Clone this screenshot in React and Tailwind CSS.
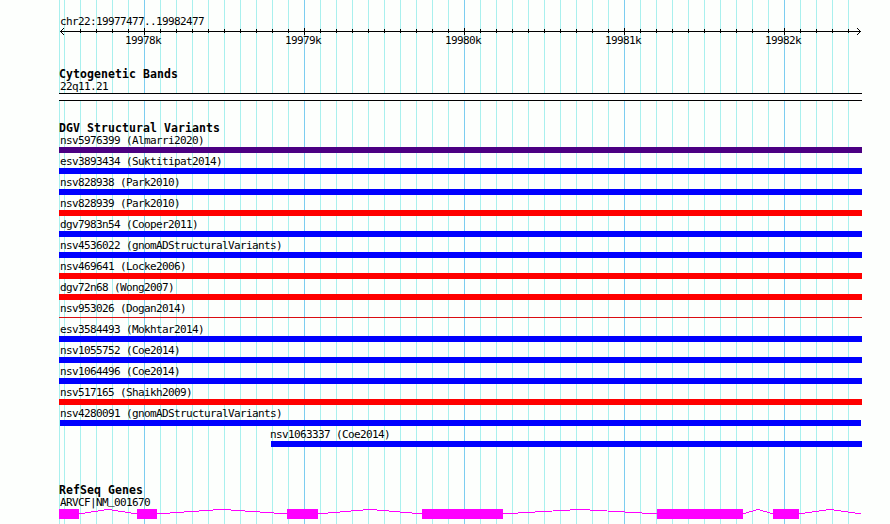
// Genome browser view of chr22:19977477..19982477
const LEFT = 59;
const WIDTH = 803;

// one grid line every 16px (100 bp), a major one every 1000 bp
const ticks = Array.from({ length: 50 }, (_, i) => 64 + i * 16);
const isMajor = (x) => (x - 144) % 160 === 0;

const labels = ['19978k', '19979k', '19980k', '19981k', '19982k'];

const variants = [
  { name: 'nsv5976399 (Almarri2020)', color: 'bg-[#4b0082]' },
  { name: 'esv3893434 (Suktitipat2014)', color: 'bg-[#0000ff]' },
  { name: 'nsv828938 (Park2010)', color: 'bg-[#0000ff]' },
  { name: 'nsv828939 (Park2010)', color: 'bg-[#ff0000]' },
  { name: 'dgv7983n54 (Cooper2011)', color: 'bg-[#0000ff]' },
  { name: 'nsv4536022 (gnomADStructuralVariants)', color: 'bg-[#0000ff]' },
  { name: 'nsv469641 (Locke2006)', color: 'bg-[#ff0000]' },
  { name: 'dgv72n68 (Wong2007)', color: 'bg-[#ff0000]' },
  { name: 'nsv953026 (Dogan2014)', color: 'bg-[#d90d12]', thin: true },
  { name: 'esv3584493 (Mokhtar2014)', color: 'bg-[#0000ff]' },
  { name: 'nsv1055752 (Coe2014)', color: 'bg-[#0000ff]' },
  { name: 'nsv1064496 (Coe2014)', color: 'bg-[#0000ff]' },
  { name: 'nsv517165 (Shaikh2009)', color: 'bg-[#ff0000]' },
  { name: 'nsv4280091 (gnomADStructuralVariants)', color: 'bg-[#0000ff]', bar: 'ml-px mr-px' },
  { name: 'nsv1063337 (Coe2014)', color: 'bg-[#0000ff]', text: 'pl-[211px]', bar: 'ml-[212px]' },
];

const exons = [
  [59, 79],
  [137, 157],
  [287, 318],
  [422, 503],
  [657, 743],
  [773, 799],
];

const GridLines = () => (
  <svg className="absolute inset-0 -z-10" width="890" height="524" shapeRendering="crispEdges">
    <rect x={LEFT} y="0" width="1" height="524" fill="#a9f0ee" />
    {ticks.map((x) => (
      <rect key={x} x={x} y="0" width="1" height="524" fill={isMajor(x) ? '#7ccdf0' : '#a9f0ee'} />
    ))}
  </svg>
);

const Ruler = () => (
  <svg className="block" width={WIDTH} height="7" viewBox="59 28 803 7" shapeRendering="crispEdges">
    <rect x="60" y="31" width="801" height="1" />
    {ticks.slice(1).map((x) => (
      <rect key={x} x={x} y={isMajor(x) ? 28 : 29} width="1" height={isMajor(x) ? 7 : 4} />
    ))}
    {[1, 2, 3].map((d) => (
      <g key={d}>
        <rect x={60 + d} y={31 - d} width="1" height="1" />
        <rect x={60 + d} y={31 + d} width="1" height="1" />
        <rect x={860 - d} y={31 - d} width="1" height="1" />
        <rect x={860 - d} y={31 + d} width="1" height="1" />
      </g>
    ))}
  </svg>
);

const Title = ({ children }) => (
  <h2 className="h-[12px] text-[11.5px] leading-[13px] font-bold tracking-[0.077px]">{children}</h2>
);

const Variant = ({ name, color, thin, text = 'pl-px', bar = '' }) => (
  <div className="h-[21px]">
    <div className={`h-[15px] leading-[17px] ${text}`}>{name}</div>
    <div className={`${thin ? 'mt-[2px] h-px' : 'h-[6px]'} ${color} ${bar}`} />
  </div>
);

const Gene = () => (
  <svg className="block" width={WIDTH} height="10" viewBox="59 509 803 10" shapeRendering="crispEdges">
    {exons.map(([start, end], i) => {
      const next = exons[i + 1] ? exons[i + 1][0] : 861;
      const mid = (end + next) / 2;
      return (
        <g key={start}>
          <rect x={start} y="509" width={end - start} height="10" fill="#ff00ff" />
          <polyline
            points={`${end},513.9 ${mid},509.4 ${next},513.9`}
            fill="none"
            stroke="#ff00ff"
          />
        </g>
      );
    })}
  </svg>
);

export default function App() {
  return (
    <div className="relative isolate h-[524px] w-[890px] overflow-hidden bg-[#fdfffd] font-['DejaVu_Sans_Mono',monospace] text-[11px] tracking-[-0.622px] whitespace-pre text-black">
      <GridLines />
      <main className="ml-[59px] flex w-[803px] flex-col pt-[13px]">
        <div className="h-[15px] pl-px leading-[17px]">chr22:19977477..19982477</div>
        <Ruler />
        <div className="flex h-[33px] pl-[66px]">
          {labels.map((label) => (
            <span key={label} className="w-[160px] shrink-0 leading-[11px]">{label}</span>
          ))}
        </div>

        <section className="h-[54px]">
          <Title>Cytogenetic Bands</Title>
          <div className="h-[13px] pl-px leading-[13px]">22q11.21</div>
          <div className="h-[8px] border-y border-black bg-white" />
        </section>

        <section className="h-[362px]">
          <Title>DGV Structural Variants</Title>
          <div className="-mt-[2px]">
            {variants.map((v) => (
              <Variant key={v.name} {...v} />
            ))}
          </div>
        </section>

        <section>
          <Title>RefSeq Genes</Title>
          <div className="h-[13px] pl-px leading-[13px]">
            ARVCF|NM<span className="font-['Liberation_Mono',monospace] leading-none">_</span>001670
          </div>
          <Gene />
        </section>
      </main>
    </div>
  );
}
